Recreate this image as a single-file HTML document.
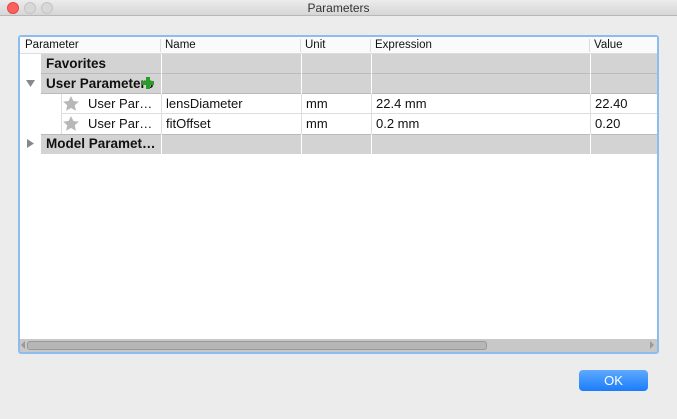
<!DOCTYPE html>
<html><head><style>
*{margin:0;padding:0;box-sizing:border-box}
body{width:677px;height:419px;background:#ececec;font-family:"Liberation Sans",sans-serif;position:relative;overflow:hidden}
.tb{position:absolute;left:0;top:0;width:677px;height:16px;background:linear-gradient(#ececec,#d6d6d6);border-bottom:1px solid #b8b8b8;text-align:center;font-size:12px;line-height:16px;color:#333}
.dot{position:absolute;top:2px;width:12px;height:12px;border-radius:50%}
.a{position:absolute}
.frame{left:18px;top:35px;width:641px;height:319px;border:2px solid #8fbcef;border-radius:3px;background:#fff}
.c{position:absolute;font-size:13px;color:#111;white-space:nowrap;line-height:20px}
.h{font-size:11.5px;line-height:17px}
.g{background:#d3d3d3}
.b{font-weight:bold;font-size:13.5px}
</style></head><body>
<div class="tb">Parameters
<div class="dot" style="left:7px;background:#fc605c;border:1px solid #de4a44"></div>
<div class="dot" style="left:24px;background:#d8d8d8;border:1px solid #c4c4c4"></div>
<div class="dot" style="left:41px;background:#d8d8d8;border:1px solid #c4c4c4"></div>
</div>
<div class="a frame"></div>
<div class="a" style="left:20px;top:37px;width:637px;height:17px;background:#fafafa;border-bottom:1px solid #ddd"></div>
<div class="c h" style="left:25px;top:37px">Parameter</div>
<div class="a" style="left:160px;top:39px;width:1px;height:13px;background:#ddd"></div>
<div class="c h" style="left:165px;top:37px">Name</div>
<div class="a" style="left:300px;top:39px;width:1px;height:13px;background:#ddd"></div>
<div class="c h" style="left:305px;top:37px">Unit</div>
<div class="a" style="left:370px;top:39px;width:1px;height:13px;background:#ddd"></div>
<div class="c h" style="left:375px;top:37px">Expression</div>
<div class="a" style="left:589px;top:39px;width:1px;height:13px;background:#ddd"></div>
<div class="c h" style="left:594px;top:37px">Value</div>
<div class="a g" style="left:41px;top:54px;width:616px;height:20px;border-bottom:1px solid #bbb"></div>
<div class="a g" style="left:41px;top:74px;width:616px;height:20px;border-bottom:1px solid #bbb"></div>
<div class="a g" style="left:41px;top:134px;width:616px;height:20px;border-top:1px solid #bbb"></div>
<div class="a" style="left:61px;top:113px;width:596px;height:1px;background:#ddd"></div>
<div class="a" style="left:61px;top:94px;width:1px;height:40px;background:#ddd"></div>
<div class="a" style="left:161px;top:54px;width:1px;height:100px;background:#fff"></div>
<div class="a" style="left:301px;top:54px;width:1px;height:100px;background:#fff"></div>
<div class="a" style="left:371px;top:54px;width:1px;height:100px;background:#fff"></div>
<div class="a" style="left:590px;top:54px;width:1px;height:100px;background:#fff"></div>
<div class="a" style="left:161px;top:94px;width:1px;height:40px;background:#ddd"></div>
<div class="a" style="left:301px;top:94px;width:1px;height:40px;background:#ddd"></div>
<div class="a" style="left:371px;top:94px;width:1px;height:40px;background:#ddd"></div>
<div class="a" style="left:590px;top:94px;width:1px;height:40px;background:#ddd"></div>
<div class="c b" style="left:46px;top:54px">Favorites</div>
<div class="c b" style="left:46px;top:74px">User Parameters</div>
<svg class="a" style="left:142px;top:77px" width="12" height="12"><path d="M4 0h4v4h4v4h-4v4h-4v-4h-4v-4h4z" fill="#2a9c2a"/></svg>
<svg class="a" style="left:26px;top:80px" width="10" height="8"><path d="M0 0h9l-4.5 7z" fill="#888"/></svg>
<svg class="a" style="left:27px;top:139px" width="8" height="10"><path d="M0 0v9l7-4.5z" fill="#888"/></svg>
<div class="c b" style="left:46px;top:134px">Model Paramet…</div>
<svg class="a" style="left:62px;top:95px" width="18" height="17"><path d="M9 1l2.4 5 5.4.6-4 3.7 1.1 5.4L9 13l-4.9 2.7 1.1-5.4-4-3.7 5.4-.6z" fill="#b8b8b8"/></svg>
<svg class="a" style="left:62px;top:115px" width="18" height="17"><path d="M9 1l2.4 5 5.4.6-4 3.7 1.1 5.4L9 13l-4.9 2.7 1.1-5.4-4-3.7 5.4-.6z" fill="#b8b8b8"/></svg>
<div class="c" style="left:88px;top:94px">User Par…</div>
<div class="c" style="left:166px;top:94px">lensDiameter</div>
<div class="c" style="left:306px;top:94px">mm</div>
<div class="c" style="left:376px;top:94px">22.4 mm</div>
<div class="c" style="left:595px;top:94px">22.40</div>
<div class="c" style="left:88px;top:114px">User Par…</div>
<div class="c" style="left:166px;top:114px">fitOffset</div>
<div class="c" style="left:306px;top:114px">mm</div>
<div class="c" style="left:376px;top:114px">0.2 mm</div>
<div class="c" style="left:595px;top:114px">0.20</div>
<div class="a" style="left:20px;top:339px;width:637px;height:13px;background:#c8c8c8"></div>
<div class="a" style="left:27px;top:341px;width:460px;height:9px;background:#b6b6b6;border:1px solid #999;border-radius:3px"></div>
<svg class="a" style="left:21px;top:341px" width="5" height="9"><path d="M4 0v8L0 4z" fill="#999"/></svg>
<svg class="a" style="left:650px;top:341px" width="5" height="9"><path d="M0 0v8l4-4z" fill="#999"/></svg>
<div class="a" style="left:579px;top:370px;width:69px;height:21px;border-radius:4px;background:linear-gradient(#5eaaff,#1a7cfb);color:#fff;font-size:13px;text-align:center;line-height:21px">OK</div>
</body></html>
